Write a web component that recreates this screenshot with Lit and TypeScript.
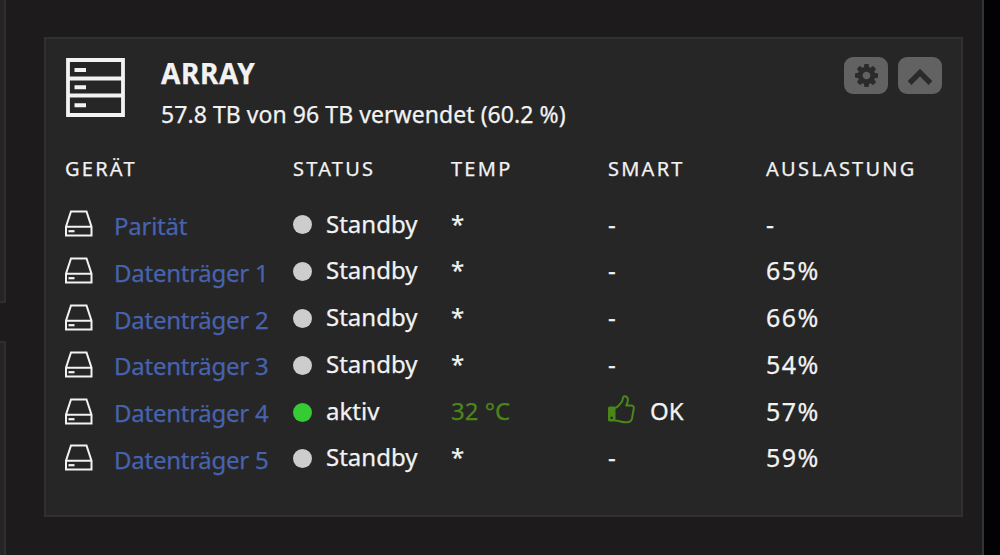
import { LitElement, html, css, svg } from "lit";
import { customElement, property } from "lit/decorators.js";

interface Disk {
  name: string;
  active?: boolean;
  temp: string;
  smart: string;
  usage: string;
}

const disks: Disk[] = [
  { name: "Parität", temp: "*", smart: "-", usage: "-" },
  { name: "Datenträger 1", temp: "*", smart: "-", usage: "65%" },
  { name: "Datenträger 2", temp: "*", smart: "-", usage: "66%" },
  { name: "Datenträger 3", temp: "*", smart: "-", usage: "54%" },
  { name: "Datenträger 4", active: true, temp: "32 °C", smart: "OK", usage: "57%" },
  { name: "Datenträger 5", temp: "*", smart: "-", usage: "59%" },
];

const GEAR =
  "M1024 640q0 106 -75 181t-181 75t-181 -75t-75 -181t75 -181t181 -75t181 75t75 181zM1536 749v-222q0 -12 -8 -23t-20 -13l-185 -28q-19 -54 -39 -91q35 -50 107 -138q10 -12 10 -25t-9 -23q-27 -37 -99 -108t-94 -71q-12 0 -26 9l-138 108q-44 -23 -91 -38q-16 -136 -29 -186q-7 -28 -36 -28h-222q-14 0 -24.5 8.5t-11.5 21.5l-28 184q-49 16 -90 37l-141 -107q-10 -9 -25 -9q-14 0 -25 11q-126 114 -165 168q-7 10 -7 23q0 12 8 23q15 21 51 66.5t54 70.5q-27 50 -41 99l-183 27q-13 2 -21 12.5t-8 23.5v222q0 12 8 23t19 13l186 28q14 46 39 92q-40 57 -107 138q-10 12 -10 24q0 10 9 23q26 36 98.5 107.5t94.5 71.5q13 0 26 -10l138 -107q44 23 91 38q16 136 29 186q7 28 36 28h222q14 0 24.5 -8.5t11.5 -21.5l28 -184q49 -16 90 -37l142 107q9 9 24 9q13 0 25 -10q129 -119 165 -170q7 -8 7 -22q0 -12 -8 -23q-15 -21 -51 -66.5t-54 -70.5q26 -50 41 -98l183 -28q13 -2 21 -12.5t8 -23.5z";

const icons = {
  array: svg`<svg width="59" height="59" viewBox="0 0 59 59">
    <path d="M2 2h55v55h-55zM2 20.500h55M2 37.500h55" fill="none" stroke="currentColor" stroke-width="3.800" />
    <path d="M8.500 12h11.500M8.500 29.200h11.500M8.500 47.200h11.500" stroke="currentColor" stroke-width="4" />
  </svg>`,
  disk: svg`<svg width="28" height="27" viewBox="0 0 28 27">
    <path d="M1 25.500V16.700L6 1.500h15.500L26.500 16.700v8.800zM1 16.700h25.500" fill="none" stroke="currentColor" stroke-width="2" />
    <path d="M3.500 21.200h6" stroke="currentColor" stroke-width="2.200" />
  </svg>`,
  gear: svg`<svg width="23" height="23" viewBox="0 -1408 1536 1536">
    <path transform="scale(1 -1)" fill="currentColor" d=${GEAR} />
  </svg>`,
  chevron: svg`<svg width="24" height="18" viewBox="0 0 24 18">
    <path d="M1.500 16L12 5.500l10.500 10.500" fill="none" stroke="currentColor" stroke-width="5.400" />
  </svg>`,
  thumb: svg`<svg width="27" height="29" viewBox="0 0 27 29">
    <path d="M7 13C10 12.500 11.500 9 13.700 7C15 5.500 14.200 1.300 16.500 1.300C20.500 1.300 20.800 5.500 18.300 10.500H23.500C25.700 10.500 26.300 12.500 25.500 15L24 23.500C23.300 26.500 21.500 27.200 19 27.200C14 27.500 12 25.800 7 25.500"
      fill="none" stroke="currentColor" stroke-width="2" stroke-linejoin="round" />
    <path fill-rule="evenodd" fill="currentColor"
      d="M1.500 11.500H6q1.500 0 1.500 1.500V25q0 1.500-1.500 1.500H1.500q-1.500 0-1.500-1.500V13Q0 11.500 1.500 11.500zM3.600 21.500a1.300 1.300 0 1 0 .1 0z" />
  </svg>`,
};

@customElement("icon-button")
export class IconButton extends LitElement {
  @property() icon: "gear" | "chevron" = "gear";

  static styles = css`
    button {
      display: flex;
      align-items: center;
      justify-content: center;
      width: 44px;
      height: 37px;
      padding: 0;
      border: none;
      border-radius: 9px;
      background: #626262;
      color: #2b2b2b;
    }
  `;

  render() {
    return html`<button>${icons[this.icon]}</button>`;
  }
}

@customElement("disk-row")
export class DiskRow extends LitElement {
  @property({ attribute: false }) disk!: Disk;

  static styles = css`
    :host {
      display: grid;
      grid-template-columns: 228px 158px 157px 158px 1fr;
      height: 46.800px;
      line-height: 46.800px;
    }

    .cell {
      display: flex;
      align-items: center;
      white-space: pre;
    }

    .name {
      margin-left: 21px;
      padding-top: 5px;
      color: #4763ae;
      letter-spacing: -0.250px;
    }

    .dot {
      width: 19px;
      height: 19px;
      margin: 2px 14px 0 0;
      border-radius: 50%;
      background: #cdcdcd;
    }

    .dot.active {
      background: #35cb35;
    }

    .green {
      color: #4b8618;
    }

    .thumb {
      display: flex;
      margin: -4px 15px 0 0;
      color: #4b8618;
    }

    .percent {
      font-size: 25px;
      letter-spacing: 1.400px;
    }

    svg {
      display: block;
    }
  `;

  render() {
    const { name, active, temp, smart, usage } = this.disk;
    return html`
      <div class="cell">${icons.disk}<span class="name">${name}</span></div>
      <div class="cell"><span class="dot ${active ? "active" : ""}"></span>${active ? "aktiv" : "Standby"}</div>
      <div class="cell ${active ? "green" : ""}">${temp}</div>
      <div class="cell">${active ? html`<span class="thumb">${icons.thumb}</span>` : ""}${smart}</div>
      <div class="cell percent">${usage}</div>
    `;
  }
}

@customElement("app-root")
export class AppRoot extends LitElement {
  static styles = css`
    :host {
      display: flex;
      box-sizing: border-box;
      width: 1000px;
      height: 555px;
      overflow: hidden;
      background: #1d1b1c;
      color: #f2f2f2;
      font-family: "Noto Sans", sans-serif;
      font-size: 24px;
      -webkit-text-stroke: 0.250px;
    }

    .side {
      display: flex;
      flex-direction: column;
      gap: 38px;
      width: 6px;
    }

    .side div {
      box-sizing: border-box;
      border: solid #2f2f2f;
      border-width: 0 2px 2px 0;
      height: 303px;
      background: #242424;
    }

    .side div + div {
      border-width: 2px 2px 0 0;
      flex: 1;
    }

    .card {
      box-sizing: border-box;
      width: 919px;
      height: 480px;
      margin: 37px 0 0 38px;
      padding: 18px 19px 0;
      border: 2px solid #303030;
      background: #262626;
    }

    .edge {
      flex: 1;
      margin-left: 19px;
      border-left: 2px solid #333333;
      background: #020204;
    }

    .head {
      display: flex;
      height: 88px;
    }

    .logo {
      width: 96px;
      padding: 1px 0 0 1px;
      box-sizing: border-box;
    }

    h2 {
      margin: 0;
      font-size: 28px;
      line-height: 33px;
      font-weight: 700;
      letter-spacing: 0.600px;
    }

    .usage {
      font-size: 23px;
      line-height: 48px;
      letter-spacing: 0.060px;
    }

    .tools {
      display: flex;
      gap: 10px;
      margin-left: auto;
    }

    .titles {
      display: grid;
      grid-template-columns: 228px 158px 157px 158px 1fr;
      height: 53px;
      font-size: 20px;
      line-height: 48px;
      letter-spacing: 2.250px;
    }
  `;

  render() {
    return html`
      <div class="side"><div></div><div></div></div>
      <section class="card">
        <div class="head">
          <div class="logo">${icons.array}</div>
          <div>
            <h2>ARRAY</h2>
            <div class="usage">57.8 TB von 96 TB verwendet (60.2 %)</div>
          </div>
          <div class="tools">
            <icon-button icon="gear"></icon-button>
            <icon-button icon="chevron"></icon-button>
          </div>
        </div>
        <div class="titles">
          <span>GERÄT</span><span>STATUS</span><span>TEMP</span><span>SMART</span><span>AUSLASTUNG</span>
        </div>
        ${disks.map((disk) => html`<disk-row .disk=${disk}></disk-row>`)}
      </section>
      <div class="edge"></div>
    `;
  }
}
